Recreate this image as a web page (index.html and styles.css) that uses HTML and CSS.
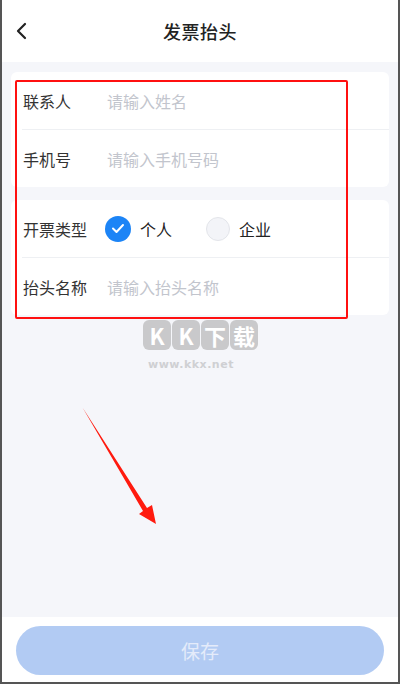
FILE: index.html
```html
<!DOCTYPE html>
<html lang="zh">
<head>
<meta charset="utf-8">
<link rel="stylesheet" href="styles.css">
</head>
<body>
<div class="app">
  <header class="header">
    <svg class="back" width="12" height="18" viewBox="0 0 12 18"><path d="M10 2 L3 9 L10 16" fill="none" stroke="#222" stroke-width="2.2" stroke-linecap="round" stroke-linejoin="round"/></svg>
    <h1 class="title">发票抬头</h1>
  </header>
  <main class="main">
    <section class="card">
      <div class="row">
        <span class="label">联系人</span>
        <span class="placeholder">请输入姓名</span>
      </div>
      <div class="divider"></div>
      <div class="row">
        <span class="label">手机号</span>
        <span class="placeholder">请输入手机号码</span>
      </div>
    </section>
    <section class="card">
      <div class="row">
        <span class="label">开票类型</span>
        <span class="radio-group">
          <span class="radio">
            <span class="dot checked"><svg width="14" height="11" viewBox="0 0 14 11"><path d="M2 5.5 L5.5 9 L12 2" fill="none" stroke="#fff" stroke-width="2" stroke-linecap="round" stroke-linejoin="round"/></svg></span>
            <span class="radio-text">个人</span>
          </span>
          <span class="radio">
            <span class="dot"></span>
            <span class="radio-text">企业</span>
          </span>
        </span>
      </div>
      <div class="divider"></div>
      <div class="row">
        <span class="label">抬头名称</span>
        <span class="placeholder">请输入抬头名称</span>
      </div>
    </section>
  </main>
  <footer class="footer">
    <button class="save">保存</button>
  </footer>

  <div class="highlight"></div>
  <div class="watermark">
    <div class="wm-boxes">
      <span class="wm-box">K</span><span class="wm-box">K</span><span class="wm-box">下</span><span class="wm-box">载</span>
    </div>
    <div class="wm-url">www.kkx.net</div>
  </div>
  <svg class="arrow" width="90" height="130" viewBox="0 0 90 130">
    <path d="M1.5 1.5 L66 102 L71 99 L75 118 L58 108 L62 105 Z" fill="#ff1a0e"/>
  </svg>
</div>
</body>
</html>
```

FILE: styles.css
```css
* { box-sizing: border-box; }
html, body { margin: 0; padding: 0; }
body {
  font-family: "Noto Sans CJK SC", "Noto Sans", sans-serif;
  background: #fff;
}
.app {
  position: relative;
  width: 400px;
  height: 684px;
  border-left: 2px solid #555;
  border-right: 2px solid #555;
  border-bottom: 2px solid #555;
  display: flex;
  flex-direction: column;
  overflow: hidden;
}
.header {
  height: 62px;
  flex: none;
  background: #fff;
  display: flex;
  align-items: center;
  justify-content: center;
  position: relative;
}
.back {
  position: absolute;
  left: 13px;
  top: 22px;
}
.title {
  margin: 0;
  font-size: 18px;
  font-weight: 500;
  color: #222;
  letter-spacing: 0.5px;
}
.main {
  flex: 1;
  background: #f5f6fa;
  padding: 10px 9px;
  display: flex;
  flex-direction: column;
  gap: 13px;
}
.card {
  background: #fff;
  border-radius: 6px;
}
.row {
  height: 57px;
  display: flex;
  align-items: center;
  padding-left: 12px;
}
.divider {
  height: 1px;
  background: #eef0f3;
  margin-left: 11px;
}
.label {
  width: 84px;
  font-size: 16px;
  color: #333;
}
.placeholder {
  font-size: 16px;
  color: #c2c5cd;
}
.radio-group {
  display: flex;
  align-items: center;
  margin-left: -1px;
}
.radio {
  display: flex;
  align-items: center;
  width: 100px;
}
.dot {
  width: 24px;
  height: 24px;
  border-radius: 50%;
  background: #f3f4f8;
  border: 1px solid #e3e5ea;
  display: flex;
  align-items: center;
  justify-content: center;
}
.dot.checked {
  width: 26px;
  height: 26px;
  background: #1c84f6;
  border: none;
  margin-left: -1px;
}
.radio-text {
  margin-left: 9px;
  font-size: 16px;
  color: #222;
}
.footer {
  flex: none;
  height: 65px;
  background: #fff;
  padding: 9px 14px 0;
}
.save {
  width: 100%;
  height: 49px;
  border: none;
  border-radius: 25px;
  background: #b2cbf3;
  color: #e4ebfa;
  font-family: inherit;
  font-size: 19px;
  padding: 0;
}
.highlight {
  position: absolute;
  left: 13px;
  top: 80px;
  width: 333px;
  height: 239px;
  border: 2px solid #ff1010;
  border-radius: 2px;
}
.watermark {
  position: absolute;
  left: 141px;
  top: 320px;
  display: flex;
  flex-direction: column;
  align-items: flex-start;
}
.wm-boxes {
  display: flex;
  gap: 1px;
}
.wm-box {
  width: 28px;
  height: 30px;
  background: #c9c9cb;
  border-radius: 6px;
  color: #fff;
  font-size: 22px;
  font-weight: 700;
  display: flex;
  align-items: center;
  justify-content: center;
  line-height: 1;
}
.wm-url {
  margin-top: 8px;
  margin-left: 5px;
  font-family: "DejaVu Sans", sans-serif;
  font-weight: 700;
  font-size: 11px;
  color: #cfd0d3;
  letter-spacing: 0.5px;
}
.arrow {
  position: absolute;
  left: 79px;
  top: 406px;
}
```
